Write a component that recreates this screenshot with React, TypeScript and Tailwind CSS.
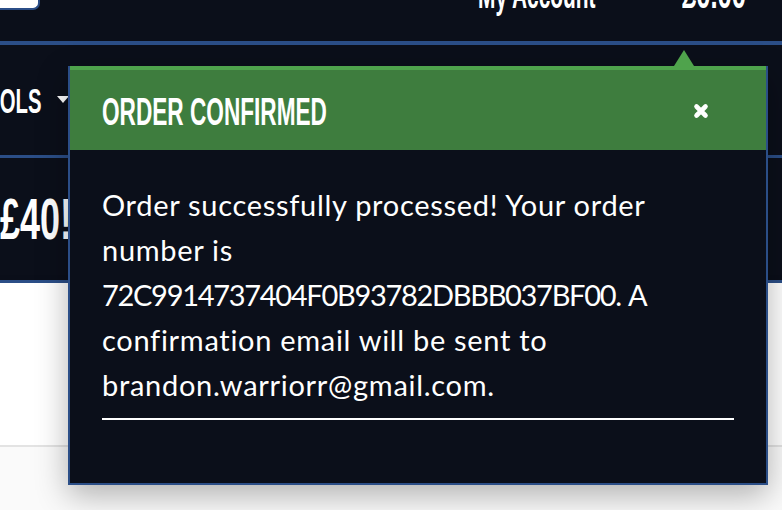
import * as React from 'react';

const cond = { fontFamily: "'Liberation Sans', Arial, sans-serif" };

function CloseIcon() {
  return (
    <svg width="16" height="18" viewBox="0 0 16 18" fill="none">
      <path d="M3.5 4.5 12.5 13.5 M12.5 4.5 3.5 13.5" stroke="white" strokeWidth="4.6" strokeLinecap="round" />
    </svg>
  );
}

export default function App() {
  return (
    <div className="relative w-[782px] h-[510px] overflow-hidden bg-white">
      {/* top bar */}
      <div className="h-[41px] bg-[#0b0f1a] flex items-start" style={cond}>
        <div className="w-[40px] h-[10px] bg-white border-r-2 border-b-2 border-[#2b4e87] rounded-br-[7px]" />
        <div className="ml-[438px] w-[205px] -mt-[22px] text-white font-bold text-[36px] leading-none whitespace-nowrap">
          <span className="inline-block origin-left scale-x-[0.58]">My Account</span>
        </div>
        <div className="-mt-[26px] text-white font-bold text-[40px] leading-none whitespace-nowrap">
          <span className="inline-block origin-left scale-x-[0.64]">£0.00</span>
        </div>
      </div>
      <div className="h-[4px] bg-[#2b4e87]" />

      {/* nav */}
      <nav className="h-[110px] bg-[#0b0f1a] flex items-start" style={cond}>
        <div className="-ml-[28px] w-[70px] mt-[38px] text-white font-bold text-[35px] leading-none whitespace-nowrap">
          <span className="inline-block origin-left scale-x-[0.58]">TOOLS</span>
        </div>
        <div className="ml-[15px] mt-[51px] w-0 h-0 border-x-[6px] border-x-transparent border-t-[7px] border-t-white" />
      </nav>
      <div className="h-[3px] bg-[#2b4e87]" />

      {/* banner */}
      <div className="h-[122px] bg-[#0b0f1a] flex items-start" style={cond}>
        <div className="mt-[32px] text-white font-bold text-[58px] leading-none whitespace-nowrap">
          <span className="inline-block origin-left scale-x-[0.62]">£40!</span>
        </div>
      </div>
      <div className="h-[3px] bg-[#2b4e87] shadow-[0_3px_8px_rgba(0,0,0,0.18)]" />

      {/* page */}
      <div className="h-[162px] bg-white" />
      <div className="h-[2px] bg-[#e3e3e3]" />
      <div className="h-[63px] bg-[#fafafa]" />

      {/* order popup */}
      <div className="absolute left-[68px] top-[66px] w-[700px] h-[419px] bg-[#0b0f1a] border-x-2 border-b-2 border-[#2b4e87] shadow-[0_10px_30px_rgba(0,0,0,0.3)]">
        <div className="absolute -top-[16px] left-[604px] w-0 h-0 border-x-[10px] border-x-transparent border-b-[16px] border-b-[#4fa34c]" />
        <div className="h-[84px] border-t-4 border-[#4fa34c] bg-[#3e7d3e] flex items-center justify-between pl-8 pt-[2px]">
          <h2 className="text-white font-bold text-[39px] leading-none whitespace-nowrap w-[230px]" style={cond}>
            <span className="inline-block origin-left scale-x-[0.58]">ORDER CONFIRMED</span>
          </h2>
          <button className="mr-[57px] flex items-center">
            <CloseIcon />
          </button>
        </div>
        <div className="px-8 pt-8">
          <p className="text-white text-[29px] leading-[45px] tracking-[0.7px]" style={{ fontFamily: "Lato, 'Open Sans', sans-serif" }}>
            Order successfully processed! Your order number is{' '}
            <span className="tracking-[-1.3px]">72C9914737404F0B93782DBBB037BF00.</span> A confirmation email will be sent to brandon.warriorr@gmail.com.
          </p>
          <hr className="mt-[11px] border-0 h-[2px] bg-white" />
        </div>
      </div>
    </div>
  );
}
